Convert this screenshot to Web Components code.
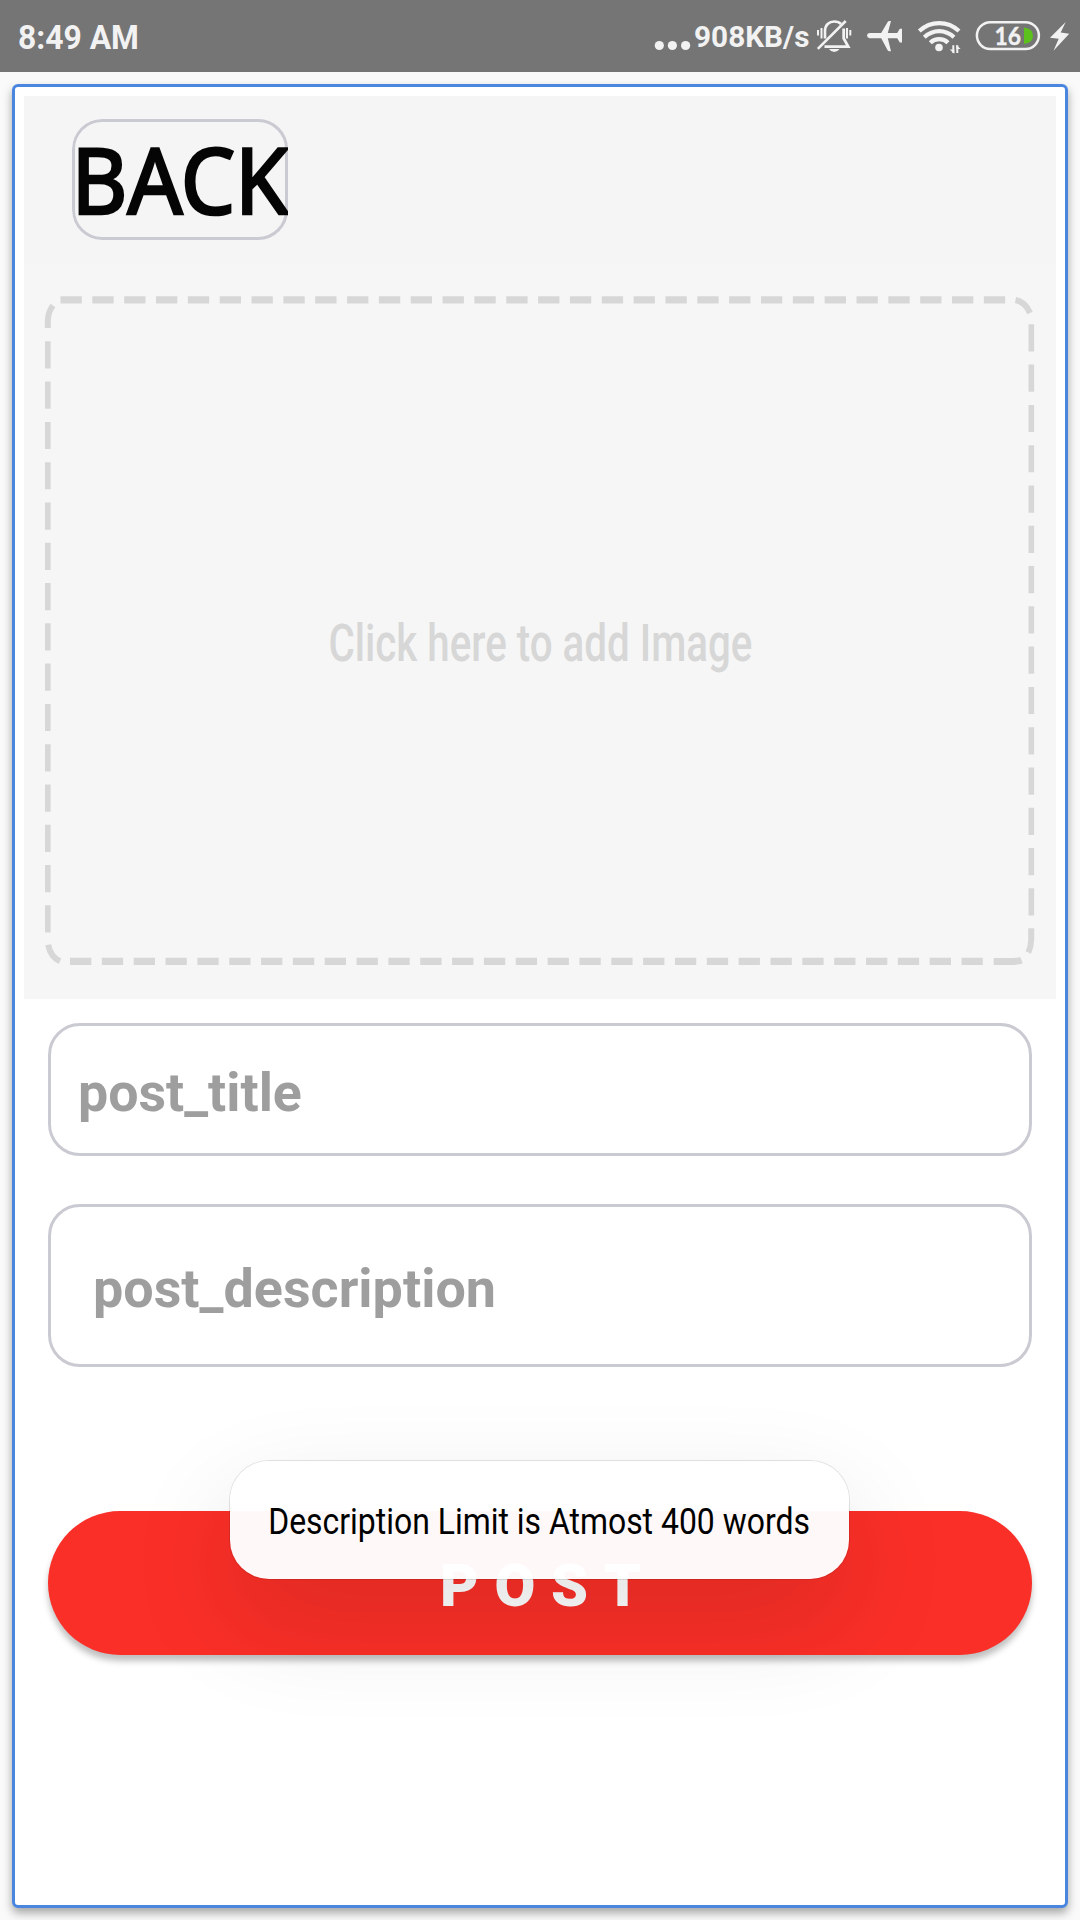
<!DOCTYPE html>
<html lang="en">
<head>
<meta charset="utf-8">
<title>New post</title>
<style>
html,body{margin:0;padding:0}
body{width:1080px;height:1920px;overflow:hidden;background:#fafafa;font-family:Roboto,sans-serif}
</style>
</head>
<body>
<post-app></post-app>
<script>
const define = (name, html, setup) => {
  const t = document.createElement('template');
  t.innerHTML = html;
  customElements.define(name, class extends HTMLElement {
    constructor() {
      super();
      this.attachShadow({ mode: 'open' }).append(t.content.cloneNode(true));
    }
    connectedCallback() { if (setup) setup(this, this.shadowRoot); }
  });
};

/* One line of text whose ink spans exactly the given width. */
define('fit-text', `
<style>
:host{display:block;flex:none;white-space:nowrap}
span{display:inline-block;transform-origin:0 50%}
</style><span><slot></slot></span>`, (host, root) => {
  const w = parseFloat(host.getAttribute('ink'));
  const cs = getComputedStyle(host);
  const ctx = document.createElement('canvas').getContext('2d');
  ctx.font = `${cs.fontWeight} ${cs.fontSize} ${cs.fontFamily}`;
  if (cs.letterSpacing !== 'normal') ctx.letterSpacing = cs.letterSpacing;
  const m = ctx.measureText(host.textContent);
  const ink = m.actualBoundingBoxLeft + m.actualBoundingBoxRight;
  const k = w / ink;
  host.style.width = w + 'px';
  root.querySelector('span').style.transform =
    `translateX(${m.actualBoundingBoxLeft * k}px) scaleX(${k})`;
});

define('status-bar', `
<style>
:host{display:flex;height:72px;background:#757575;color:#f2f2f2;font-weight:700;box-sizing:border-box;padding-left:19px}
.time{font-size:32.5px;line-height:72px;padding-top:1.5px;height:70px}
.rate{font-size:30px;line-height:72px;padding-top:.5px;height:71px;margin-left:3px}
.gap{flex:1}
svg{display:block;flex:none}
</style>
<fit-text class="time" ink="118.5">8:49 AM</fit-text>
<span class="gap"></span>
<svg width="38" height="72" viewBox="654 0 38 72" fill="#f2f2f2"><circle cx="659.3" cy="45.5" r="4.6"/><circle cx="672.4" cy="45.5" r="4.6"/><circle cx="685.6" cy="45.5" r="4.6"/></svg>
<fit-text class="rate" ink="114">908KB/s</fit-text>
<svg width="46" height="72" viewBox="809 0 46 72" fill="none" stroke="#f2f2f2" stroke-width="2.6">
  <path d="M825 38.500V31C825 25 829 21.500 834.300 21.500C837.300 21.500 839.500 22.500 841 24"/>
  <path d="M843.700 28.500V38.500L848.200 46.600H824.500" stroke-width="2.800"/>
  <path d="M817.800 48.800L845.700 21"/>
  <path d="M818 30v5.500M821.500 28v10.500M847 28v10.500M850.300 30v5.500" stroke-width="2"/>
  <path d="M829 49h10.500q-2 3-5.250 3t-5.250-3z" fill="#f2f2f2" stroke="none"/>
</svg>
<svg width="59" height="72" viewBox="855 0 59 72" fill="#f2f2f2">
  <path d="M869.500 33H881.200L887.500 22.300Q888.200 21 889.500 21H891L887.800 33H897.200L899.800 28.700H902V42.500H899.800L897.200 38.200H887.800L891 51.200H889.500Q888.200 51.200 887.500 50L881.200 38.200H869.500Q867 38 867 35.600T869.500 33Z"/>
</svg>
<svg width="55" height="72" viewBox="914 0 55 72" fill="none" stroke="#f2f2f2" stroke-width="4.200">
  <path d="M919.300 31Q928 23.100 939.200 23.100T959 31"/>
  <path d="M924.300 37.300Q931 31.200 939.200 31.200T954 37.300"/>
  <path d="M930.300 42.800Q934 39.200 939.200 39.200T948 42.800"/>
  <circle cx="939" cy="47.500" r="3.800" fill="#f2f2f2" stroke="none"/>
  <path d="M953.300 45.200V53M957.300 45.200V53" stroke-width="2"/>
  <path d="M949.700 49.500H954.300V53.800ZM956.300 44.800V49H960.600Z" fill="#f2f2f2" stroke="none"/>
</svg>
<svg width="111" height="72" viewBox="969 0 111 72">
  <rect x="976.900" y="22.200" width="62" height="26.800" rx="13.400" fill="none" stroke="#f2f2f2" stroke-width="2.500"/>
  <path d="M1024 27.500Q1033 28.500 1033 35.700T1024 44Z" fill="#5cc11d"/>
  <text x="994.500" y="45" font-family="Lato,sans-serif" font-weight="700" stroke="#f2f2f2" stroke-width=".4" font-size="25.500" textLength="26.500" lengthAdjust="spacingAndGlyphs" fill="#f2f2f2">16</text>
  <path d="M1065.700 22L1050 37.800L1058.700 38.800L1053.500 50.700L1069.200 33.700L1060.700 32.400Z" fill="#f2f2f2"/>
</svg>`);

define('back-button', `
<style>
:host{display:block;box-sizing:border-box;width:216px;height:121px;overflow:hidden;border-radius:30px 0 0 30px;color:#050505}
.frame{box-sizing:border-box;height:121px;border:3px solid #cacad2;border-radius:30px;padding-left:4.300px}
fit-text{font:400 91px/110px "Noto Sans",sans-serif;padding-top:2px;-webkit-text-stroke:2.700px #050505}
</style><div class="frame"><fit-text ink="210">BACK</fit-text></div>`);

define('image-picker', `
<style>
:host{display:grid;height:735px;background:#f6f6f6}
svg,.label{grid-area:1/1}
svg{display:block}
.label{padding:349.700px 0 0 305.500px;color:#d7d7d7;font-size:51px;font-weight:500;line-height:60px}
</style>
<svg width="1032" height="735" viewBox="24 264 1032 735" fill="none" stroke="#d7d7d7">
  <g stroke-width="7.100" stroke-dasharray="21.300 10.540">
    <path d="M60.500 299.900H1005.500"/>
    <path d="M70 961.400H984"/>
  </g>
  <g stroke-width="5.600" stroke-dasharray="27.200 13.090">
    <path d="M1031.300 324.300V916"/>
    <path d="M47.800 341.300V933"/>
  </g>
  <g stroke-width="6">
    <path d="M1015.500 300Q1025.500 302 1030 313"/>
    <path d="M1031.200 928.300V940Q1031 947 1028.300 952.500"/>
    <path d="M1021.500 960.200Q1018.500 961.300 1014 961.400H993.700" stroke-width="7"/>
    <path d="M60 961.300Q50.500 957 48.200 944.700"/>
    <path d="M47.800 328V320Q48.300 311.500 53 305.500"/>
  </g>
</svg>
<div class="label"><fit-text ink="421.400">Click here to add Image</fit-text></div>`);

define('text-field', `
<style>
:host{display:block;box-sizing:border-box;border:3px solid #cacad2;border-radius:32px;color:#9e9e9e;font-weight:700;font-size:54px;line-height:64px}
</style><slot></slot>`);

define('post-button', `
<style>
:host{display:block;box-sizing:border-box;height:144px;border-radius:72px;background:#fa2f28;box-shadow:0 6px 6px rgba(0,0,0,.25);padding:43px 0 0 395px;color:#fff;font-weight:900;font-size:60px;line-height:64px}
fit-text{letter-spacing:16px}
</style><fit-text ink="197.500">POST</fit-text>`);

define('toast-message', `
<style>
:host{display:block;box-sizing:border-box;position:absolute;left:230px;top:1461px;width:619px;height:118px;border-radius:39px;background:rgba(255,255,255,.97);box-shadow:0 0 0 1px rgba(0,0,0,.1),0 42px 110px rgba(0,0,0,.12);color:#000;font-size:36px;line-height:44px;padding:38.800px 0 0 40.300px}
</style><fit-text ink="538.500">Description Limit is Atmost 400 words</fit-text>`);

define('post-card', `
<style>
:host{display:block;box-sizing:border-box;margin:12px 12px 0;height:1824px;border:3px solid #4a86e0;border-radius:6px;background:#fff;padding:9px;box-shadow:0 5px 10px rgba(0,0,0,.34)}
</style><slot></slot>`);

define('post-app', `
<style>
:host{display:block;position:relative;width:1080px;height:1920px;overflow:hidden}
header{box-sizing:border-box;height:168px;background:#f5f5f5;padding:23px 0 0 48px}
form{display:flex;flex-direction:column;padding:24px 24px 0}
.title{height:133px;padding:34.500px 0 0 29.300px}
.desc{height:163px;margin-top:48px;padding:49.500px 0 0 43.500px}
post-button{margin-top:144px}
</style>
<status-bar></status-bar>
<post-card>
  <header><back-button></back-button></header>
  <image-picker></image-picker>
  <form>
    <text-field class="title"><fit-text ink="220.700">post_title</fit-text></text-field>
    <text-field class="desc"><fit-text ink="398.700">post_description</fit-text></text-field>
    <post-button></post-button>
  </form>
</post-card>
<toast-message></toast-message>`);
</script>
</body>
</html>
